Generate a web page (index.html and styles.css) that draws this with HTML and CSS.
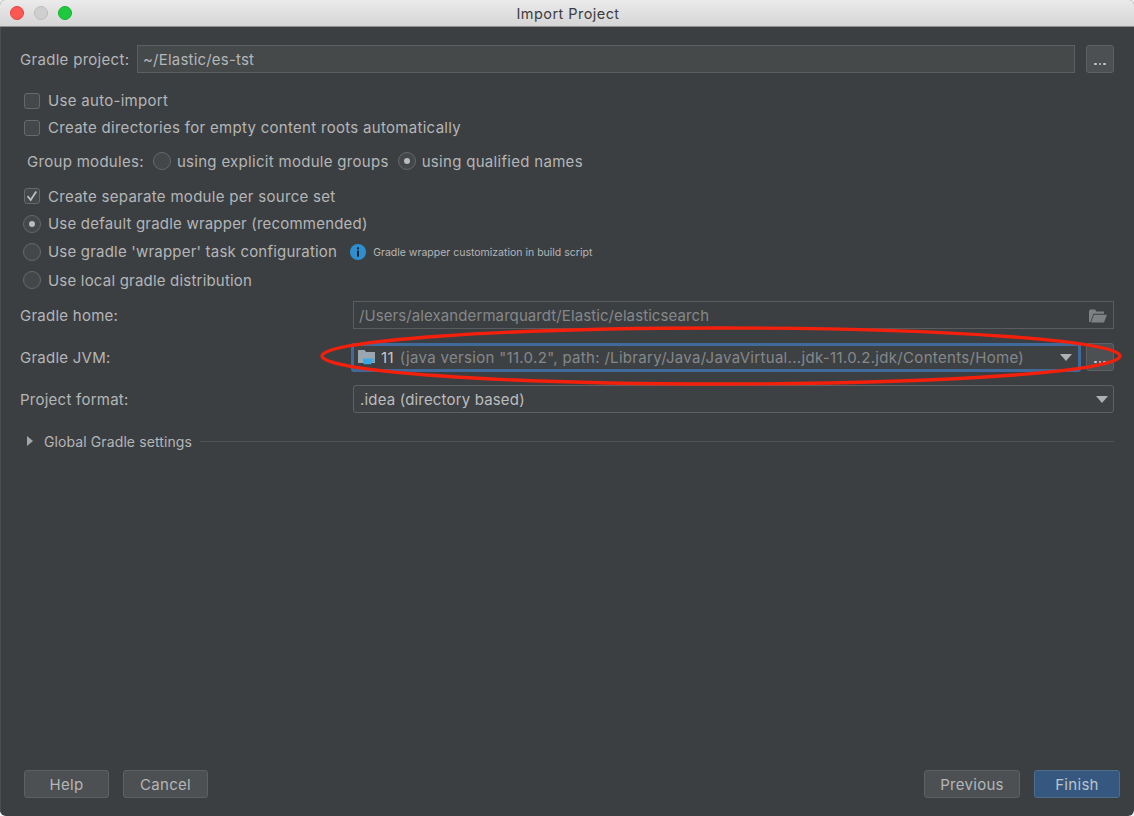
FILE: index.html
```html
<!DOCTYPE html>
<html lang="en">
<head>
<meta charset="utf-8">
<title>Import Project</title>
<link rel="stylesheet" href="styles.css">
</head>
<body>
<div class="window">
  <header class="titlebar">
    <div class="lights">
      <span class="light red"></span>
      <span class="light grey"></span>
      <span class="light green"></span>
    </div>
    <div class="title">Import Project</div>
  </header>
  <main class="content">
    <div class="project-row">
      <label class="project-label">Gradle project:</label>
      <div class="field project-field">~/Elastic/es-tst</div>
      <button class="dots-btn"><span class="dots"><i></i><i></i><i></i></span></button>
    </div>

    <div class="options first">
      <div class="opt"><span class="check"></span>Use auto-import</div>
      <div class="opt"><span class="check"></span>Create directories for empty content roots automatically</div>
    </div>

    <div class="group-row">
      <span class="group-label">Group modules:</span>
      <span class="radio"></span><span class="group-text">using explicit module groups</span>
      <span class="radio on"></span><span>using qualified names</span>
    </div>

    <div class="options second">
      <div class="opt">
        <span class="check">
          <svg viewBox="0 0 16 16" width="16" height="16"><path d="M3.6 8.2 6.7 12 12.2 3.4" fill="none" stroke="#b9bcbe" stroke-width="1.9"/></svg>
        </span>Create separate module per source set
      </div>
      <div class="opt tight narrow"><span class="radio lead on"></span>Use default gradle wrapper (recommended)</div>
      <div class="opt tall">
        <span class="radio lead"></span><span class="wrapper-text">Use gradle 'wrapper' task configuration</span>
        <svg class="info" viewBox="0 0 16 16" width="16" height="16"><circle cx="8" cy="8" r="8" fill="#2f8fce"/><rect x="7" y="6.6" width="2" height="6" fill="#10212e"/><rect x="7" y="3.4" width="2" height="2" fill="#10212e"/></svg>
        <span class="hint">Gradle wrapper customization in build script</span>
      </div>
      <div class="opt narrow"><span class="radio lead"></span>Use local gradle distribution</div>
    </div>

    <div class="form">
      <label class="form-label">Gradle home:</label>
      <div class="field home-field">
        <span class="dim">/Users/alexandermarquardt/Elastic/elasticsearch</span>
        <svg class="open-folder" viewBox="0 0 18 14" width="18" height="14"><path d="M0 2.2 1 .6h5l1.4 1.8H15v2.4H4.4L1.4 13H0Z" fill="#7d8184"/><path d="M4.9 5.8H18L15 13.6H2Z" fill="#7d8184"/></svg>
      </div>

      <label class="form-label">Gradle JVM:</label>
      <div class="jvm-line">
        <div class="field combo focused">
          <svg class="jdk" viewBox="0 0 18 16" width="18" height="16"><path d="M0 1h6.5l1.6 2H17v11H0Z" fill="#9aa7b0"/><path d="M5 9.5h9v3.2a2.6 2.6 0 0 1-2.6 2.6H7.6A2.6 2.6 0 0 1 5 12.7Z" fill="#38a9e4"/><path d="M14 10.2h1.8v2.2H14" fill="none" stroke="#38a9e4" stroke-width="1"/></svg>
          <span class="jvm-num">11</span>
          <span class="dim jvm-text">(java version "11.0.2", path: /Library/Java/JavaVirtual...jdk-11.0.2.jdk/Contents/Home)</span>
          <span class="arrow"></span>
        </div>
        <button class="dots-btn"><span class="dots"><i></i><i></i><i></i></span></button>
      </div>

      <label class="form-label">Project format:</label>
      <div class="field combo format">
        <span>.idea (directory based)</span>
        <span class="arrow"></span>
      </div>
    </div>

    <div class="global-row">
      <span class="tri"></span>
      <span class="global-label">Global Gradle settings</span>
      <span class="rule"></span>
    </div>

    <footer class="footer">
      <div class="btn-group">
        <button class="btn help">Help</button>
        <button class="btn cancel">Cancel</button>
      </div>
      <div class="btn-group">
        <button class="btn previous">Previous</button>
        <button class="btn primary">Finish</button>
      </div>
    </footer>
  </main>
  <svg class="annotation" viewBox="0 0 812 64" width="812" height="64">
    <ellipse cx="406" cy="31" rx="399" ry="28" fill="none" stroke="#f4200c" stroke-width="3.4"/>
  </svg>
</div>
</body>
</html>
```
FILE: styles.css
```css
* { box-sizing: border-box; }
html, body { margin: 0; height: 100%; background: #f2f2f2; }
body {
  font-family: "Inter", "Liberation Sans", sans-serif;
  font-size: 15px;
  letter-spacing: .3px;
  color: #b4b6b8;
}
.window {
  position: relative;
  width: 1134px;
  height: 816px;
  display: flex;
  flex-direction: column;
  overflow: hidden;
  border-radius: 5px 5px 6px 6px;
  background: #3c3f41;
}
.titlebar {
  position: relative;
  flex: 0 0 27px;
  height: 27px;
  display: flex;
  align-items: center;
  justify-content: center;
  background: linear-gradient(#ebebeb, #d5d5d5);
  border-bottom: 1px solid #8f8f8f;
}
.lights {
  position: absolute;
  left: 10px;
  top: 6px;
  display: flex;
  gap: 10px;
}
.light { width: 14px; height: 14px; border-radius: 50%; }
.light.red { background: #fc5753; border: 1px solid #e0443e; }
.light.grey { background: #cfcfcf; border: 1px solid #bdbdbd; }
.light.green { background: #1fc93d; border: 1px solid #18b030; }
.title { font-size: 14.5px; letter-spacing: .45px; color: #3c3c3c; padding-left: 2px; }

.content {
  flex: 1;
  display: flex;
  flex-direction: column;
  padding: 18px 20px 18px 19px;
  border-left: 1px solid #4b4e50;
}
.field {
  display: flex;
  align-items: center;
  height: 28px;
  padding: 1px 5px 0;
  border: 1px solid #5e6163;
  background: #3e4143;
  color: #b4b6b8;
}
.project-row { display: flex; align-items: center; height: 28px; }
.project-label { width: 117px; padding-top: 1px; }
.project-field {
  flex: 1;
  background: #45494a;
  border: 1px solid #5c6062;
  margin-right: 11px;
  letter-spacing: .2px;
}
.dots-btn {
  flex: 0 0 28px;
  width: 28px;
  height: 28px;
  padding: 0;
  border: 1px solid #5e6163;
  border-radius: 3px;
  background: #4c5052;
  display: flex;
  align-items: flex-end;
  justify-content: center;
}
.dots { display: flex; gap: 2px; margin-bottom: 7px; }
.dots i { display: block; width: 2.5px; height: 2.5px; border-radius: 50%; background: #c4c6c8; }

.options { display: flex; flex-direction: column; }
.options.first { margin-top: 14px; }
.options.first .opt { height: 27px; }
.options.second { margin-top: 7px; }
.opt {
  display: flex;
  align-items: center;
  height: 28px;
  padding-left: 4px;
}
.opt.tight { height: 27px; }
.opt.tall { height: 29px; }
.opt.narrow { letter-spacing: .2px; }
.check {
  flex: 0 0 16px;
  width: 16px;
  height: 16px;
  margin-right: 8px;
  border: 1px solid #66696b;
  border-radius: 3px;
  background: #45484a;
  display: flex;
  align-items: center;
  justify-content: center;
}
.check svg { flex: none; }
.radio {
  flex: 0 0 18px;
  width: 18px;
  height: 18px;
  border: 1px solid #66696b;
  border-radius: 50%;
  background: #43474a;
  display: inline-flex;
  align-items: center;
  justify-content: center;
}
.radio.on::after {
  content: "";
  width: 6px;
  height: 6px;
  border-radius: 50%;
  background: #b9bcbe;
}
.radio.lead { margin-left: -1px; margin-right: 7px; }

.group-row {
  display: flex;
  align-items: center;
  height: 28px;
  margin-top: 6px;
  padding-left: 7px;
}
.group-label { margin-right: 9px; }
.group-row .radio { margin-right: 6px; }
.group-text { margin-right: 9px; }

.wrapper-text { letter-spacing: .2px; }
.info { margin-left: 13px; margin-right: 7px; flex: none; }
.hint { font-size: 10.5px; letter-spacing: 0; padding-top: 1px; }

.form {
  display: grid;
  grid-template-columns: 333px 1fr;
  grid-template-rows: 28px 28px 28px;
  row-gap: 14px;
  margin-top: 7px;
  align-items: center;
}
.form-label { letter-spacing: .25px; }
.dim { color: #85888a; }
.home-field { justify-content: space-between; border-color: #5a5d5f; background: #3c3f41; letter-spacing: .09px; }
.open-folder { flex: none; margin-right: 1px; }
.jvm-line { display: flex; align-items: center; gap: 5px; margin-left: -2px; }
.combo { position: relative; }
.combo.focused {
  flex: 1;
  height: 29px;
  border: 3px solid #3f6a9a;
  border-radius: 3px;
  padding: 0 0 0 4px;
  letter-spacing: .32px;
}
.combo.focused .arrow { right: 6px; }
.jdk { flex: none; margin-right: 5px; }
.jvm-num { margin-right: 6px; color: #c6c8ca; }
.jvm-text { white-space: nowrap; }
.format { border-radius: 3px; color: #bbbdbf; padding: 0 5px 0 6px; letter-spacing: .17px; }
.arrow {
  position: absolute;
  right: 5px;
  top: 50%;
  margin-top: -3px;
  width: 0;
  height: 0;
  border-left: 6px solid transparent;
  border-right: 6px solid transparent;
  border-top: 7px solid #aeb0b2;
}
.global-row {
  display: flex;
  align-items: center;
  height: 28px;
  margin-top: 14px;
  padding-left: 7px;
}
.tri {
  width: 0;
  height: 0;
  border-top: 5px solid transparent;
  border-bottom: 5px solid transparent;
  border-left: 6px solid #a4a6a8;
  margin-right: 11px;
}
.global-label { font-size: 14px; letter-spacing: .1px; }
.rule { flex: 1; height: 1px; background: #515456; margin-left: 8px; }

.footer {
  margin-top: auto;
  margin-right: -6px;
  display: flex;
  justify-content: space-between;
  padding-left: 4px;
}
.btn-group { display: flex; gap: 14px; }
.btn {
  height: 28px;
  padding: 0;
  font: inherit;
  letter-spacing: inherit;
  color: #b4b6b8;
  border: 1px solid #5e6163;
  border-radius: 3px;
  background: #4c5052;
}
.help, .cancel { width: 85px; }
.previous { width: 96px; }
.primary { width: 86px; background: #365880; border-color: #4c708c; color: #bcc4cc; }

.annotation {
  position: absolute;
  left: 315px;
  top: 325px;
  pointer-events: none;
}
```
